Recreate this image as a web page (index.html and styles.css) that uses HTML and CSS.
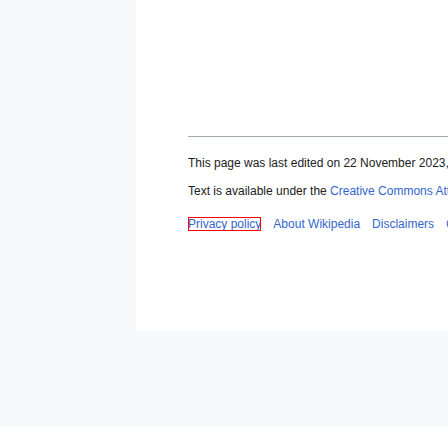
FILE: index.html
```html
<!DOCTYPE html>
<html lang="en">
<head>
<meta charset="utf-8">
<title>Footer</title>
<link rel="stylesheet" href="styles.css">
</head>
<body>
<div class="page">
  <div class="layout">
    <div class="sidebar"></div>
    <div class="main">
      <div class="body-space"></div>
      <footer class="footer">
        <ul class="info">
          <li>This page was last edited on 22 November 2023, at 10:12<span class="utc"> (UTC).</span></li>
          <li>Text is available under the <a href="#">Creative Commons Attribution-ShareAlike License 4.0</a>; additional terms may apply.</li>
        </ul>
        <ul class="places">
          <li><a href="#" class="focused">Privacy policy</a></li>
          <li><a href="#">About Wikipedia</a></li>
          <li><a href="#">Disclaimers</a></li>
          <li><a href="#">Contact Wikipedia</a></li>
          <li><a href="#">Code of Conduct</a></li>
        </ul>
      </footer>
    </div>
  </div>
</div>
</body>
</html>
```

FILE: styles.css
```css
html, body {
  margin: 0;
  padding: 0;
  overflow: hidden;
  background: #ffffff;
}

body {
  font-family: "Liberation Sans", Arial, sans-serif;
  color: #202122;
}

.page {
  background: #f8f9fa;
  padding-bottom: 96px;
  width: 1200px;
}

.layout {
  display: flex;
  height: 331px;
}

.sidebar {
  flex: none;
  width: 136px;
}

.main {
  flex: 1;
  background: #ffffff;
  padding-left: 52px;
}

.body-space {
  height: 136px;
}

.footer {
  border-top: 1px solid #a2a9b1;
  padding-top: 11.6px;
  font-size: 12px;
  line-height: 1.4;
}

.footer ul {
  list-style: none;
  margin: 0;
  padding: 0;
}

.info li {
  padding: 6px 0;
  white-space: nowrap;
}

.places {
  margin-top: 4px !important;
  display: flex;
  gap: 12px;
}

.places li {
  padding: 6px 0;
  white-space: nowrap;
}

a {
  color: #3366cc;
  text-decoration: none;
}

.focused {
  outline: 1px solid #ff0000;
  outline-offset: -1px;
}
```
